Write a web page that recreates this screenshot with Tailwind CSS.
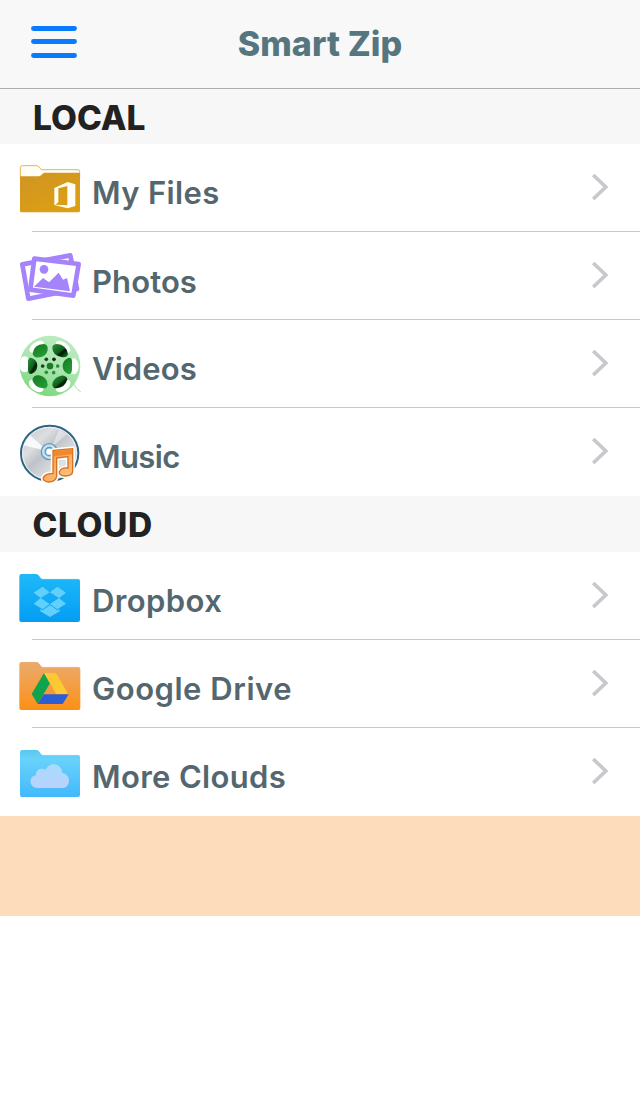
<!DOCTYPE html>
<html lang="en">
<head>
<meta charset="utf-8">
<meta name="viewport" content="width=device-width">
<title>Smart Zip</title>
<script src="https://cdn.jsdelivr.net/npm/@tailwindcss/browser@4"></script>
</head>
<body class="bg-white">
<svg class="hidden"><defs>
<symbol id="chevron" viewBox="0 0 18 28"><path d="M2.2 2 L14.8 14 L2.2 26" fill="none" stroke="#c7c7cc" stroke-width="3.6"/></symbol>
</defs></svg>
<main class="flex h-[1096px] w-[640px] flex-col overflow-hidden bg-white font-['Inter',sans-serif]">
  <header class="grid h-[89px] shrink-0 grid-cols-[1fr_auto_1fr] items-center border-b border-[#acacac] bg-[#f8f8f8]">
    <svg class="ml-[31px] h-8 w-[46px] -mt-1" viewBox="0 0 46 32" stroke="#087cfc" stroke-width="4.9" stroke-linecap="round"><path d="M2.5 2.5H43.5M2.5 15.5H43.5M2.5 29.5H43.5"/></svg>
    <h1 class="text-[34px] leading-[44px] font-extrabold tracking-[0.1px] text-[#55757f]">Smart Zip</h1>
  </header>
  <section>
    <h2 class="h-[55px] bg-[#f7f7f7] pl-[33px] text-[33.5px] leading-[58px] font-extrabold tracking-[0px] text-[#222]">LOCAL</h2>
    <ul class="text-[31px] font-semibold text-[#55676e]">
      <li>
        <div class="flex h-[87px] items-center">
          <svg class="h-[87px] w-[90px]" viewBox="0 0 90 87"><defs><linearGradient id="gold" x2=".6" y2="1"><stop stop-color="#cf9522"/><stop offset="1" stop-color="#dc9f14"/></linearGradient></defs><g transform="translate(10 11) scale(.33333)"><path d="M31 70V38q0-6 6-6H80q4 0 7 4l7 8H204q5 0 5 5V70Z" fill="#fffdf6" stroke="#dfa83a" stroke-width="2.5"/><path d="M30 64H86q4 0 8-4l8-7H210V167q0 5-5 5H35q-5 0-5-5Z" fill="url(#gold)"/><path fill-rule="evenodd" d="M133 99L173 81L196 88V153L173 160L133 150ZM145 100V142L136 149L172 151V93Z" fill="#fffdf5"/></g></svg>
          <span class="pl-[2px] pt-3 tracking-[0.35px]">My Files</span>
          <svg class="ml-auto mr-[31px] mb-[2px] h-7 w-[18px]"><use href="#chevron"/></svg>
        </div>
        <div class="ml-8 h-px bg-[#c8c7cc]"></div>
      </li>
      <li>
        <div class="flex h-[87px] items-center">
          <svg class="h-[87px] w-[90px]" viewBox="0 0 90 87"><g transform="translate(10 11) scale(.33333)" stroke="#a583fa" stroke-linejoin="round" stroke-width="14"><path d="M37 64L181 37L201 138L55 167Z" fill="#fff"/><path d="M73 47L206 63L190 158L61 140Z" fill="#fff"/><circle cx="102" cy="79" r="13" fill="#a583fa" stroke="none"/><path d="M72 131L99 105L117 118L146 89L159 110L171 105L180 145Z" fill="#a583fa" stroke="none"/></g></svg>
          <span class="pl-[2px] pt-3.5 tracking-[0.1px]">Photos</span>
          <svg class="ml-auto mr-[31px] mb-[2px] h-7 w-[18px]"><use href="#chevron"/></svg>
        </div>
        <div class="ml-8 h-px bg-[#c8c7cc]"></div>
      </li>
      <li>
        <div class="flex h-[87px] items-center">
          <svg class="h-[87px] w-[90px]" viewBox="0 0 90 87"><defs><linearGradient id="reel" x1=".7" y1="0" x2=".3" y2="1"><stop stop-color="#bcecc2"/><stop offset=".5" stop-color="#a9e5ae"/><stop offset="1" stop-color="#79d77c"/></linearGradient><linearGradient id="hole" x2="1" y2="1"><stop stop-color="#249831"/><stop offset=".5" stop-color="#126020"/><stop offset=".65" stop-color="#001a04"/><stop offset="1" stop-color="#198a25"/></linearGradient><linearGradient id="green" x2=".6" y2="1"><stop stop-color="#137a20"/><stop offset="1" stop-color="#259a33"/></linearGradient><clipPath id="disc"><circle cx="120" cy="114" r="91"/></clipPath></defs><g transform="translate(10 8) scale(.33333)"><path d="M190 160Q193 180 212 191" fill="none" stroke="#a8d9aa" stroke-width="3"/><circle cx="120" cy="114" r="91" fill="url(#reel)"/><g clip-path="url(#disc)"><g fill="#fff"><ellipse cx="80" cy="56" rx="25" ry="13" transform="rotate(-35 80 56)"/><ellipse cx="159" cy="57" rx="25" ry="14" transform="rotate(35 159 57)"/><ellipse cx="44" cy="109" rx="17" ry="24"/><ellipse cx="190" cy="115" rx="16" ry="24"/><ellipse cx="79" cy="173" rx="25" ry="16" transform="rotate(35 79 173)"/><ellipse cx="159" cy="173" rx="25" ry="16" transform="rotate(-35 159 173)"/></g></g><g fill="url(#hole)"><path d="M68 76Q72 49 101 48Q115 49 113 67Q109 85 89 88Q69 91 68 76Z" fill="url(#green)"/><path d="M127 59Q128 48 141 48Q168 50 174 77Q173 90 154 87Q127 81 127 59Z"/><path d="M54 100Q55 87 65 90Q82 96 82 114Q81 132 65 137Q55 140 54 125Z"/><path d="M186 99Q185 86 174 90Q158 97 158 115Q159 133 175 138Q186 140 186 124Z" fill="url(#green)"/><path d="M67 156Q69 141 87 142Q112 148 113 170Q112 182 99 181Q74 179 67 156Z" fill="url(#green)"/><path d="M172 154Q168 141 153 143Q129 149 127 170Q128 182 141 181Q166 178 172 154Z"/></g><circle cx="120" cy="114" r="10" fill="#23762a"/><g fill="#17441d"><circle cx="109" cy="94" r="5.5"/><circle cx="132" cy="94" r="5.5" fill="#092c0e"/><circle cx="98" cy="114" r="5.5"/><circle cx="143" cy="114" r="5.5" fill="#299035"/><circle cx="109" cy="133" r="5.5" fill="#299035"/><circle cx="131" cy="134" r="5.5" fill="#299035"/></g></g></svg>
          <span class="pl-[2px] pt-3 tracking-[0.1px]">Videos</span>
          <svg class="ml-auto mr-[31px] mb-[2px] h-7 w-[18px]"><use href="#chevron"/></svg>
        </div>
        <div class="ml-8 h-px bg-[#c8c7cc]"></div>
      </li>
      <li>
        <div class="flex h-[87px] items-center">
          <svg class="h-[87px] w-[90px]" viewBox="0 0 90 87"><defs><linearGradient id="cd" x2="1" y2="1"><stop stop-color="#c2c5ca"/><stop offset=".3" stop-color="#dcdee0"/><stop offset=".45" stop-color="#bfc2c7"/><stop offset=".7" stop-color="#e0e1e3"/><stop offset="1" stop-color="#c4c7cc"/></linearGradient><linearGradient id="note" x2="1" y2="1"><stop stop-color="#f5953d"/><stop offset="1" stop-color="#ffc889"/></linearGradient></defs><g transform="translate(10 8) scale(.33333)"><ellipse cx="119" cy="112" rx="86" ry="83" fill="url(#cd)" stroke="#2c6684" stroke-width="6"/><ellipse cx="119" cy="112" rx="81" ry="78" fill="none" stroke="#eef1f3" stroke-width="3"/><path d="M113 105L60 58L40 88Z" fill="#fff" opacity=".85"/><path d="M125 94L147 42L172 53Z" fill="#fff" opacity=".45"/><circle cx="118" cy="107" r="24" fill="#c9e1f0" stroke="#5b9cc0" stroke-width="4"/><circle cx="118" cy="107" r="12" fill="#fff" stroke="#5b9cc0" stroke-width="5"/><path d="M129 103L188 98V166Q187 179 166 180Q146 179 148 167Q154 153 174 156V122L140 126V180Q138 198 115 198Q96 195 100 184Q108 171 129 173Z" fill="#fff" stroke="#fff" stroke-width="13" stroke-linejoin="round"/><path d="M129 103L188 98V166Q187 179 166 180Q146 179 148 167Q154 153 174 156V122L140 126V180Q138 198 115 198Q96 195 100 184Q108 171 129 173Z" fill="url(#note)" stroke="#d9701d" stroke-width="4" stroke-linejoin="round"/><path d="M131 106L187 101V115L131 121Z" fill="#f1892c"/></g></svg>
          <span class="pl-[2px] pt-3 tracking-[-0.6px]">Music</span>
          <svg class="ml-auto mr-[31px] mb-[2px] h-7 w-[18px]"><use href="#chevron"/></svg>
        </div>
        <div class="h-px"></div>
      </li>
    </ul>
  </section>
  <section>
    <h2 class="h-[56px] bg-[#f7f7f7] pl-[32.5px] text-[33.5px] leading-[59px] font-extrabold tracking-[0.6px] text-[#222]">CLOUD</h2>
    <ul class="text-[31px] font-semibold text-[#55676e]">
      <li>
        <div class="flex h-[87px] items-center">
          <svg class="h-[87px] w-[90px]" viewBox="0 0 90 87"><defs><linearGradient id="blue" x2="0" y2="1"><stop stop-color="#1eb9f8"/><stop offset="1" stop-color="#049df4"/></linearGradient></defs><g transform="translate(10 13) scale(.33333)"><path d="M28 34q0-7 6-7H78q5 0 9 5l5 7q2 3 7 3H204q6 0 6 6V165q0 6-6 6H34q-6 0-6-6Z" fill="url(#blue)"/><path d="M92 43H206" stroke="#4bcdfb" stroke-width="2"/><g fill="#62d0fb"><path d="M71 83L98 65L119 82L92 99ZM120 82L142 65L168 83L147 99ZM71 116L92 99L119 117L98 133ZM120 117L147 99L168 116L142 133Z"/><path d="M91 132L98 136L120 120L142 136L149 132V139L120 156L91 139Z"/></g></g></svg>
          <span class="pl-[2px] pt-3 tracking-[0.4px]">Dropbox</span>
          <svg class="ml-auto mr-[31px] mb-[2px] h-7 w-[18px]"><use href="#chevron"/></svg>
        </div>
        <div class="ml-8 h-px bg-[#c8c7cc]"></div>
      </li>
      <li>
        <div class="flex h-[87px] items-center">
          <svg class="h-[87px] w-[90px]" viewBox="0 0 90 87"><defs><linearGradient id="orange" x2="0" y2="1"><stop stop-color="#e9ab6d"/><stop offset=".4" stop-color="#f3a04b"/><stop offset="1" stop-color="#fb9016"/></linearGradient></defs><g transform="translate(10 13) scale(.33333)"><path d="M28 34q0-7 6-7H80q5 0 8 5l5 7q2 3 7 3H205q6 0 6 6V165q0 6-6 6H34q-6 0-6-6Z" fill="url(#orange)"/><path d="M96 43H207" stroke="#f4bd87" stroke-width="2"/><path d="M102 60L120 91L83 153L65 123Z" fill="#10a24c"/><path d="M102 60H138L175 124H139Z" fill="#fcc834"/><path d="M101 124H176L158 153H83Z" fill="#2d5dd4"/></g></svg>
          <span class="pl-[2px] pt-3 tracking-[0.53px]">Google Drive</span>
          <svg class="ml-auto mr-[31px] mb-[2px] h-7 w-[18px]"><use href="#chevron"/></svg>
        </div>
        <div class="ml-8 h-px bg-[#c8c7cc]"></div>
      </li>
      <li>
        <div class="flex h-[87px] items-center">
          <svg class="h-[87px] w-[90px]" viewBox="0 0 90 87"><defs><linearGradient id="sky" x2="0" y2="1"><stop stop-color="#58c9ef"/><stop offset=".2" stop-color="#69d1fb"/><stop offset="1" stop-color="#42b9fb"/></linearGradient><linearGradient id="cloud" x2="0" y2="1"><stop stop-color="#a9daff"/><stop offset="1" stop-color="#b9d2fb"/></linearGradient></defs><g transform="translate(10 13) scale(.33333)"><path d="M30 34q0-7 6-7H80q5 0 8 5l5 7q2 3 7 3H204q6 0 6 6V162q0 6-6 6H36q-6 0-6-6Z" fill="url(#sky)"/><path d="M96 43H206" stroke="#8cddfc" stroke-width="2"/><path d="M84 141C54 140 56 105 78 103C76 83 98 79 106 87C119 60 156 67 157 96C184 99 183 140 157 141Z" fill="url(#cloud)"/></g></svg>
          <span class="pl-[2px] pt-3 tracking-[0.33px]">More Clouds</span>
          <svg class="ml-auto mr-[31px] mb-[2px] h-7 w-[18px]"><use href="#chevron"/></svg>
        </div>
        <div class="h-px"></div>
      </li>
    </ul>
  </section>
  <div class="h-[100px] shrink-0 bg-[#fddcbb]"></div>
</main>
</body>
</html>
